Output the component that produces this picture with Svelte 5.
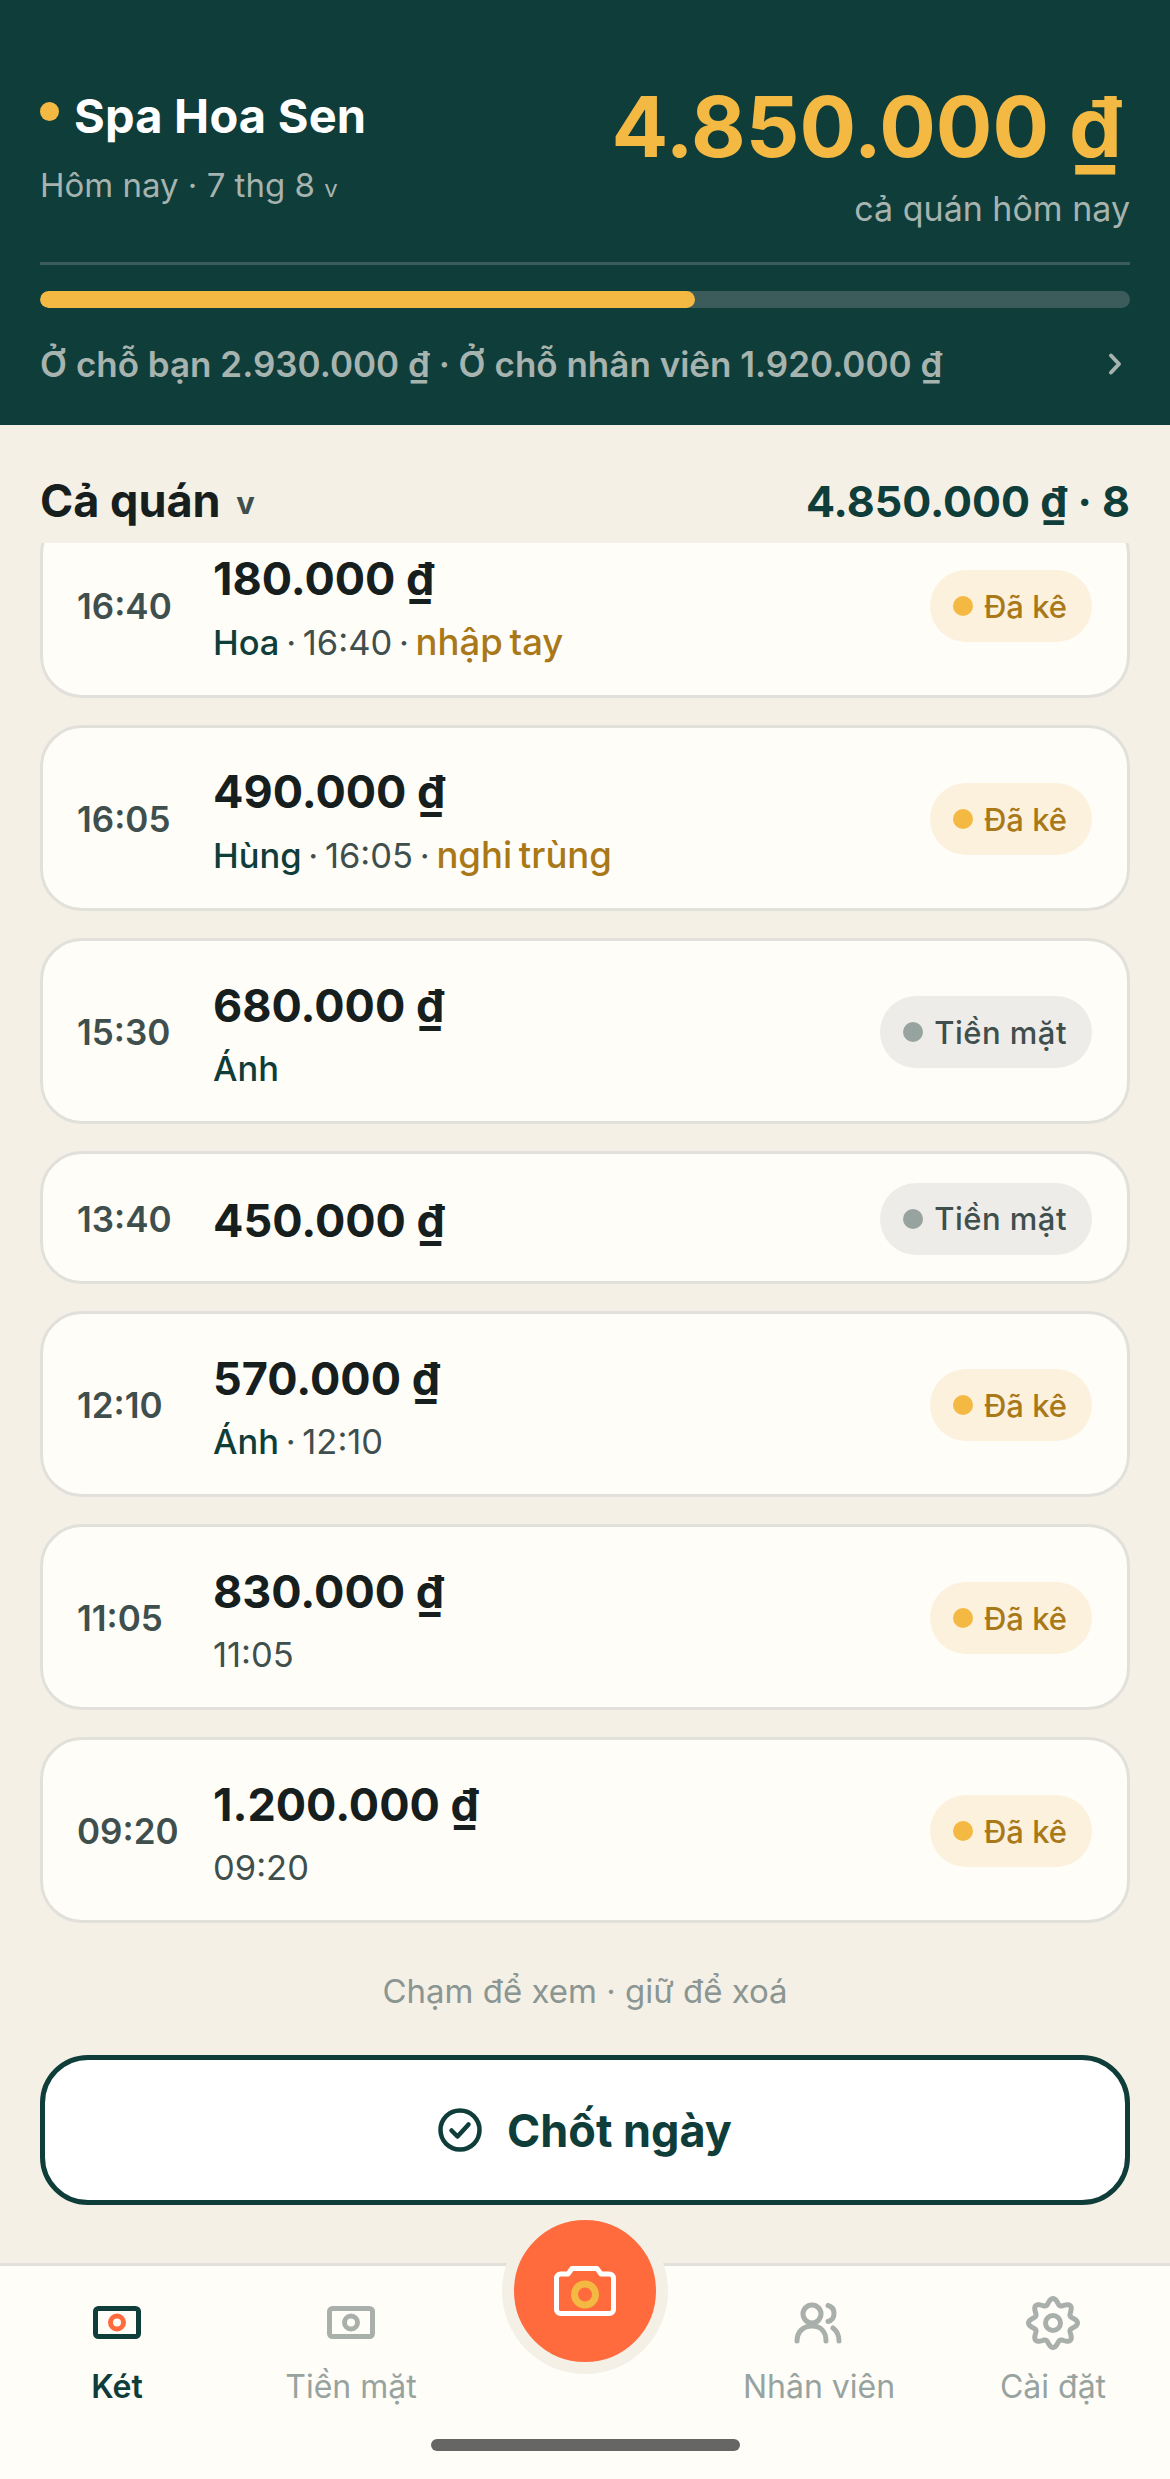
<script lang="ts">
  type Row = {
    time: string
    amount: string
    who?: string
    at?: string
    note?: string
    cash?: boolean
  }

  const rows: Row[] = [
    { time: '16:40', amount: '180.000 ₫', who: 'Hoa', at: '16:40', note: 'nhập tay' },
    { time: '16:05', amount: '490.000 ₫', who: 'Hùng', at: '16:05', note: 'nghi trùng' },
    { time: '15:30', amount: '680.000 ₫', who: 'Ánh', cash: true },
    { time: '13:40', amount: '450.000 ₫', cash: true },
    { time: '12:10', amount: '570.000 ₫', who: 'Ánh', at: '12:10' },
    { time: '11:05', amount: '830.000 ₫', at: '11:05' },
    { time: '09:20', amount: '1.200.000 ₫', at: '09:20' }
  ]

  // wavy 8-lobe outline for the settings gear
  let gear = ''
  for (let i = 0; i <= 160; i++) {
    const a = (i / 160) * Math.PI * 2
    const r = 21.5 + 3 * Math.cos(8 * a)
    const x = 27 + r * Math.sin(a)
    const y = 27 - r * Math.cos(a)
    gear += `${i ? 'L' : 'M'}${x.toFixed(2)} ${y.toFixed(2)}`
  }
  gear += 'Z'
</script>

<div class="screen">
  <header class="top">
    <div class="top-row">
      <div class="shop">
        <div class="shop-name"><span class="shop-dot"></span>Spa Hoa Sen</div>
        <div class="shop-date">Hôm nay · 7 thg 8 <span class="caret-small">v</span></div>
      </div>
      <div class="total">
        <div class="total-num">4.850.000 ₫</div>
        <div class="total-label">cả quán hôm nay</div>
      </div>
    </div>
    <div class="rule"></div>
    <div class="bar"><div class="bar-fill"></div></div>
    <div class="split">
      <span>Ở chỗ bạn 2.930.000 ₫ · Ở chỗ nhân viên 1.920.000 ₫</span>
      <svg class="chev" width="16" height="24" viewBox="0 0 16 24" fill="none" stroke="#A6B3AF" stroke-width="4" stroke-linecap="round" stroke-linejoin="round"><path d="M4 3.500l8 8.500-8 8.500" /></svg>
    </div>
  </header>

  <div class="filter">
    <div class="filter-name">Cả quán <span class="caret">v</span></div>
    <div class="filter-sum">4.850.000 ₫ · 8</div>
  </div>

  <div class="list-clip">
    <div class="list">
      {#each rows as row}
        <div class="card" class:short={!row.who && !row.at}>
          <div class="time">{row.time}</div>
          <div class="info">
            <div class="amount">{row.amount}</div>
            {#if row.who || row.at}
              <div class="meta">
                {#if row.who}<span class="who">{row.who}</span>{/if}{#if row.who && row.at}{' · '}{/if}{#if row.at}{row.at}{/if}{#if row.note}{' · '}<span class="note">{row.note}</span>{/if}
              </div>
            {/if}
          </div>
          <div class="pill" class:cash={row.cash}>
            <span class="pill-dot"></span>{row.cash ? 'Tiền mặt' : 'Đã kê'}
          </div>
        </div>
      {/each}
    </div>
    <div class="hint">Chạm để xem · giữ để xoá</div>
    <button class="close-day">
      <svg width="44" height="44" viewBox="0 0 44 44" fill="none" stroke="#0F3D3A" stroke-width="4.5" stroke-linecap="round" stroke-linejoin="round"><circle cx="22" cy="22" r="19.5" /><path d="M13.5 22.5l6 6 11-12" /></svg>
      Chốt ngày
    </button>
  </div>

  <nav class="tabs">
    <div class="tab active">
      <svg class="ico" width="54" height="54" viewBox="0 0 54 54" fill="none"><rect x="5.5" y="12.5" width="43" height="28" rx="3" stroke="#0F3D3A" stroke-width="5" /><circle cx="27" cy="26.5" r="6.5" stroke="#FF6B3D" stroke-width="5" /></svg>
      <span>Két</span>
    </div>
    <div class="tab">
      <svg class="ico" width="54" height="54" viewBox="0 0 54 54" fill="none"><rect x="5.5" y="12.5" width="43" height="28" rx="3" stroke="#A9AFAB" stroke-width="5" /><circle cx="27" cy="26.5" r="6.5" stroke="#A9AFAB" stroke-width="5" /></svg>
      <span>Tiền mặt</span>
    </div>
    <div class="tab">
      <div class="fab">
        <svg width="62" height="50" viewBox="0 0 62 50" fill="none"><path d="M6.500 8H14l4-5.500h25l4 5.500h8.500a4 4 0 0 1 4 4v31.500a4 4 0 0 1-4 4H6.500a4 4 0 0 1-4-4V12a4 4 0 0 1 4-4z" stroke="#fff" stroke-width="5" stroke-linejoin="round" /><circle cx="31" cy="28.500" r="10.500" stroke="#F4B942" stroke-width="7" /></svg>
      </div>
    </div>
    <div class="tab">
      <svg class="ico" width="54" height="54" viewBox="0 0 54 54" fill="none" stroke="#A9AFAB" stroke-width="5" stroke-linecap="round"><circle cx="20" cy="18" r="9" /><path d="M5 45c0-9 6-15 15-15s14 6 14 15" /><path d="M36 9.500c4 1 6 4 6 8s-2 7-6 8" /><path d="M41 32c4 3 6 7 6 13" /></svg>
      <span>Nhân viên</span>
    </div>
    <div class="tab">
      <svg class="ico" width="54" height="54" viewBox="0 0 54 54" fill="none" stroke="#A9AFAB" stroke-width="5" stroke-linejoin="round"><path d={gear} /><circle cx="27" cy="27" r="7.500" /></svg>
      <span>Cài đặt</span>
    </div>
    <div class="home-bar"></div>
  </nav>
</div>

<style>
  :global(body) {
    margin: 0;
    background: #f4f0e6;
  }
  .screen {
    width: 1170px;
    height: 2479px;
    display: flex;
    flex-direction: column;
    font-family: 'Inter', 'Noto Sans', sans-serif;
    overflow: hidden;
  }

  .top {
    height: 425px;
    box-sizing: border-box;
    padding: 80px 40px 0;
    background: #0f3d3a;
    flex: none;
  }
  .top-row {
    display: flex;
    justify-content: space-between;
    height: 182px;
  }
  .shop-name {
    display: flex;
    align-items: center;
    gap: 15px;
    margin-top: 6px;
    color: #fff;
    font-size: 47px;
    font-weight: 700;
    line-height: 60px;
    letter-spacing: 0.2px;
  }
  .shop-dot {
    width: 19px;
    height: 19px;
    border-radius: 50%;
    background: #f4b942;
    transform: translateY(-5px);
  }
  .shop-date {
    margin-top: 17px;
    color: #a6b3af;
    font-size: 33px;
    line-height: 44px;
  }
  .caret-small {
    font-size: 24px;
  }
  .total {
    text-align: right;
  }
  .total-num {
    margin-top: 3px;
    margin-right: 8px;
    color: #f4b942;
    font-size: 84px;
    font-weight: 700;
    line-height: 88px;
  }
  .total-label {
    margin-top: 16px;
    color: #a6b3af;
    font-size: 34px;
    line-height: 44px;
  }
  .rule {
    height: 3px;
    background: #3b5c5a;
  }
  .bar {
    height: 17px;
    margin-top: 26px;
    border-radius: 9px;
    background: #3b5c5a;
    overflow: hidden;
  }
  .bar-fill {
    width: 60.1%;
    height: 100%;
    border-radius: 9px;
    background: #f4b942;
  }
  .split {
    display: flex;
    justify-content: space-between;
    align-items: center;
    margin-top: 33px;
    color: #a6b3af;
    font-size: 35px;
    font-weight: 600;
    line-height: 46px;
  }
  .chev {
    margin-right: 7px;
  }

  .filter {
    flex: none;
    height: 118px;
    box-sizing: border-box;
    padding: 48px 40px 0;
    display: flex;
    justify-content: space-between;
    line-height: 56px;
    font-weight: 700;
    font-size: 43px;
  }
  .filter-name {
    color: #161e1e;
    font-size: 45px;
  }
  .caret {
    margin-left: 5px;
    font-size: 31px;
    color: #3f4f4d;
    vertical-align: 3px;
  }
  .filter-sum {
    color: #0f3d3a;
  }

  .list-clip {
    flex: 1;
    min-height: 0;
    overflow: hidden;
    padding: 0 40px;
  }
  .list {
    display: flex;
    flex-direction: column;
    gap: 27px;
    margin-top: -31px;
  }
  .card {
    display: flex;
    align-items: center;
    box-sizing: border-box;
    height: 186px;
    padding: 2px 35px 0;
    background: #fffdf8;
    border: 3px solid #e2e0db;
    border-radius: 42px;
  }
  .card.short {
    height: 133px;
  }
  .time {
    width: 136px;
    flex: none;
    margin-left: -1px;
    color: #3f4f4d;
    font-size: 35px;
    font-weight: 600;
  }
  .info {
    flex: 1;
    padding-top: 4px;
  }
  .amount {
    color: #161e1e;
    font-size: 45px;
    font-weight: 700;
    line-height: 58px;
  }
  .meta {
    margin-top: 11px;
    color: #3f4f4d;
    font-size: 34.5px;
    line-height: 46px;
    word-spacing: -3px;
  }
  .who {
    color: #0f3d3a;
    font-weight: 500;
  }
  .note {
    color: #a97818;
    font-size: 36.5px;
    font-weight: 500;
  }
  .pill {
    display: flex;
    align-items: center;
    gap: 11px;
    height: 72px;
    padding: 0 25px 0 23px;
    border-radius: 36px;
    background: #fcf1dc;
    color: #a97818;
    font-size: 31px;
    font-weight: 500;
  }
  .pill-dot {
    width: 20px;
    height: 20px;
    border-radius: 50%;
    background: #f4b942;
  }
  .pill.cash {
    background: #edece8;
    color: #3f4f4d;
    letter-spacing: 0.5px;
  }
  .pill.cash .pill-dot {
    background: #97a39f;
  }

  .hint {
    margin-top: 46px;
    text-align: center;
    color: #8b9693;
    font-size: 33px;
    line-height: 44px;
  }
  .close-day {
    width: 100%;
    height: 150px;
    margin-top: 42px;
    display: flex;
    align-items: center;
    justify-content: center;
    gap: 25px;
    background: #fff;
    border: 5px solid #0f3d3a;
    border-radius: 48px;
    color: #0f3d3a;
    font-family: inherit;
    font-size: 45px;
    font-weight: 700;
  }

  .tabs {
    flex: none;
    position: relative;
    height: 216px;
    box-sizing: border-box;
    display: grid;
    grid-template-columns: repeat(5, 234px);
    background: #fffdf8;
    border-top: 3px solid #e2e0db;
  }
  .tab {
    display: flex;
    flex-direction: column;
    align-items: center;
    padding-top: 30px;
    color: #97a39f;
    font-size: 32px;
    line-height: 44px;
  }
  .tab .ico {
    margin-bottom: 15px;
  }
  .tab.active {
    color: #0f3d3a;
    font-weight: 600;
  }
  .fab {
    position: absolute;
    top: -58px;
    left: 502px;
    width: 142px;
    height: 142px;
    display: flex;
    align-items: center;
    justify-content: center;
    background: #ff6b3d;
    border: 12px solid #f4f0e6;
    border-radius: 50%;
  }
  .home-bar {
    position: absolute;
    left: 431px;
    top: 173px;
    width: 309px;
    height: 12px;
    border-radius: 6px;
    background: #666664;
  }
</style>
